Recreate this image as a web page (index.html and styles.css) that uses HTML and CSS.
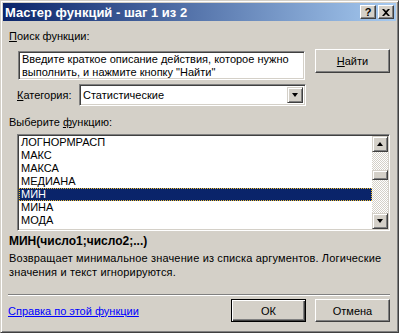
FILE: index.html
```html
<!DOCTYPE html>
<html lang="ru">
<head>
  <meta charset="UTF-8" />
  <title>Мастер функций - шаг 1 из 2</title>
  <link rel="stylesheet" href="styles.css">
</head>
<body>
  <div class="window">
    <div class="titlebar">
      <span class="title">Мастер функций - шаг 1 из 2</span>
      <div class="caption-btns">
        <span class="cap-btn">?</span>
        <span class="cap-btn">
          <svg width="8" height="7" viewBox="0 0 8 7"><path d="M0 0h2l2 2 2-2h2L5 3.5 8 7H6L4 5 2 7H0l3-3.5z" fill="#000"/></svg>
        </span>
      </div>
    </div>

    <div class="content">
      <div class="label first"><u>П</u>оиск функции:</div>

      <div class="search-row">
        <div class="search-box">Введите краткое описание действия, которое нужно выполнить, и нажмите кнопку "Найти"</div>
        <button class="btn find"><u>Н</u>айти</button>
      </div>

      <div class="category-row">
        <span class="cat-label"><u>К</u>атегория:</span>
        <div class="select">
          <span class="select-value">Статистические</span>
          <span class="drop-btn"><i class="arrow-down"></i></span>
        </div>
      </div>

      <div class="label pick">Выберите <u>ф</u>ункцию:</div>

      <div class="listbox">
        <ul class="items">
          <li>ЛОГНОРМРАСП</li>
          <li>МАКС</li>
          <li>МАКСА</li>
          <li>МЕДИАНА</li>
          <li class="selected">МИН</li>
          <li>МИНА</li>
          <li>МОДА</li>
        </ul>
        <div class="scrollbar">
          <span class="sb-btn"><i class="arrow-up"></i></span>
          <div class="track">
            <span class="thumb"></span>
          </div>
          <span class="sb-btn"><i class="arrow-down"></i></span>
        </div>
      </div>

      <div class="signature">МИН(число1;число2;...)</div>
      <div class="desc">Возвращает минимальное значение из списка аргументов. Логические значения и текст игнорируются.</div>

      <div class="separator"></div>

      <div class="footer">
        <a href="#" class="help">Справка по этой функции</a>
        <button class="btn default">ОК</button>
        <button class="btn cancel">Отмена</button>
      </div>
    </div>
  </div>
</body>
</html>
```

FILE: styles.css
```css
body {
  margin: 0;
  background: #d4d0c8;
  font-family: 'Liberation Sans', Arial, sans-serif;
  font-size: 11px;
  color: #000;
}
.window {
  width: 399px;
  height: 333px;
  box-sizing: border-box;
  background: #d4d0c8;
  border: 1px solid;
  border-color: #d4d0c8 #404040 #404040 #d4d0c8;
  box-shadow: inset 1px 1px #fff, inset -1px -1px #808080;
  padding: 2px;
}
.titlebar {
  height: 18px;
  display: flex;
  align-items: center;
  background: linear-gradient(to right, #0a246a, #a6caf0);
  color: #fff;
}
.title {
  font-weight: bold;
  font-size: 13px;
  padding-left: 2px;
  flex: 1;
}
.caption-btns {
  display: flex;
  gap: 2px;
  padding-right: 2px;
}
.cap-btn {
  width: 16px;
  height: 14px;
  box-sizing: border-box;
  background: #d4d0c8;
  border: 1px solid;
  border-color: #fff #404040 #404040 #fff;
  box-shadow: inset -1px -1px #808080;
  color: #000;
  font-weight: bold;
  font-size: 11px;
  display: flex;
  align-items: center;
  justify-content: center;
  line-height: 1;
}
.content {
  padding: 0 6px;
}
.label {
  height: 13px;
  line-height: 13px;
}
.label.first {
  margin-top: 9px;
}
.search-row {
  display: flex;
  align-items: flex-start;
  margin-top: 6px;
}
.search-box {
  margin: 2px 0 0 9px;
  width: 287px;
  height: 29px;
  box-sizing: border-box;
  background: #fff;
  border: 1px solid;
  border-color: #808080 #fff #fff #808080;
  box-shadow: inset 1px 1px #404040, inset -1px -1px #d4d0c8;
  padding: 1px 3px;
  line-height: 13px;
}
.btn {
  font-family: inherit;
  font-size: 11px;
  color: #000;
  width: 75px;
  height: 23px;
  background: #d4d0c8;
  border: 1px solid;
  border-color: #fff #404040 #404040 #fff;
  box-shadow: inset -1px -1px #808080;
  padding: 0;
}
.find {
  margin-left: 10px;
  height: 24px;
}
.category-row {
  display: flex;
  align-items: center;
  margin-top: 4px;
}
.cat-label {
  margin-left: 8px;
  width: 62px;
}
.select {
  width: 227px;
  height: 22px;
  box-sizing: border-box;
  display: flex;
  align-items: center;
  background: #fff;
  border: 1px solid;
  border-color: #808080 #fff #fff #808080;
  box-shadow: inset 1px 1px #404040, inset -1px -1px #d4d0c8;
  padding: 2px;
}
.select-value {
  flex: 1;
  padding-left: 1px;
}
.drop-btn,
.sb-btn {
  width: 16px;
  height: 16px;
  box-sizing: border-box;
  background: #d4d0c8;
  border: 1px solid;
  border-color: #d4d0c8 #404040 #404040 #d4d0c8;
  box-shadow: inset 1px 1px #fff, inset -1px -1px #808080;
  display: flex;
  align-items: center;
  justify-content: center;
}
.arrow-down,
.arrow-up {
  width: 0;
  height: 0;
  border-left: 3.5px solid transparent;
  border-right: 3.5px solid transparent;
}
.arrow-down {
  border-top: 4px solid #000;
}
.arrow-up {
  border-bottom: 4px solid #000;
}
.label.pick {
  margin-top: 10px;
}
.listbox {
  margin: 5px 0 0 8px;
  width: 373px;
  height: 97px;
  box-sizing: border-box;
  display: flex;
  background: #fff;
  border: 1px solid;
  border-color: #808080 #fff #fff #808080;
  box-shadow: inset 1px 1px #404040, inset -1px -1px #d4d0c8;
  padding: 1px;
}
.items {
  list-style: none;
  margin: 0;
  padding: 0;
  flex: 1;
  overflow: hidden;
}
.items li {
  height: 13px;
  line-height: 13px;
  padding-left: 2px;
}
.items li.selected {
  background: #0a246a;
  color: #fff;
  outline: 1px dotted #f0c030;
  outline-offset: -1px;
}
.scrollbar {
  width: 16px;
  display: flex;
  flex-direction: column;
}
.track {
  flex: 1;
  background-image: conic-gradient(#fff 25%, #d4d0c8 0 50%, #fff 0 75%, #d4d0c8 0);
  background-size: 2px 2px;
  padding-top: 18px;
}
.thumb {
  display: block;
  height: 8px;
  background: #d4d0c8;
  border: 1px solid;
  border-color: #d4d0c8 #404040 #404040 #d4d0c8;
  box-shadow: inset 1px 1px #fff, inset -1px -1px #808080;
}
.signature {
  margin-top: 4px;
  font-weight: bold;
  font-size: 12px;
  line-height: 13px;
}
.desc {
  margin-top: 3px;
  line-height: 14px;
  letter-spacing: 0.15px;
  width: 375px;
}
.separator {
  margin: 15px 0 0 -1px;
  width: 382px;
  border-top: 1px solid #808080;
  border-bottom: 1px solid #fff;
}
.footer {
  display: flex;
  align-items: center;
  margin-top: 3px;
}
.help {
  color: #0000ff;
  margin-left: -1px;
  flex: 1;
}
.default {
  border-color: #000;
  box-shadow: inset 1px 1px #fff, inset -1px -1px #404040, inset -2px -2px #808080;
}
.cancel {
  margin-left: 9px;
}
```
